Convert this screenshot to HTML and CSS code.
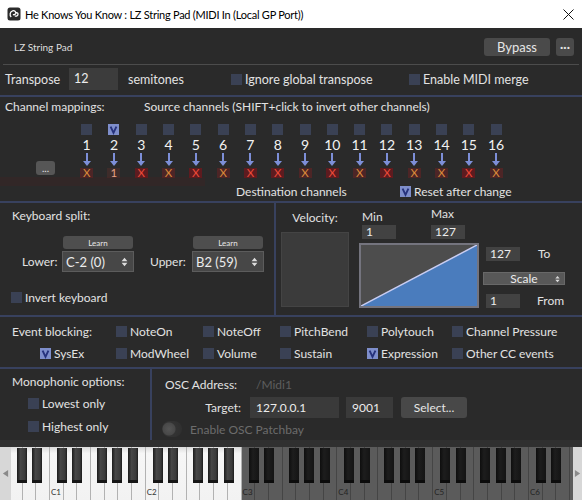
FILE: index.html
```html
<!DOCTYPE html>
<html>
<head>
<meta charset="utf-8">
<link rel="stylesheet" href="styles.css">
</head>
<body>
<div class="window">
  <div class="titlebar">
    <svg class="app-icon" width="14" height="14" viewBox="0 0 14 14">
      <rect x="0.5" y="0.5" width="13" height="13" rx="2.5" fill="#2b2b2b"/>
      <path d="M4.2 10 C2.4 8.4 2.8 4.6 5.6 3.8 C7.6 3.3 9 4.6 8.7 6.2 C8.4 7.6 7 8.1 5.9 7.5 M8.7 6.2 C9.6 5.3 11.2 5.8 11 7.3 C10.8 8.8 9.3 9.5 7.9 9" fill="none" stroke="#fff" stroke-width="1.3"/>
    </svg>
    <span class="title">He Knows You Know : LZ String Pad (MIDI In (Local GP Port))</span>
    <svg class="close" width="11" height="11" viewBox="0 0 11 11"><path d="M0.5 0.5 L10.5 10.5 M10.5 0.5 L0.5 10.5"/></svg>
  </div>

  <div class="header">
    <span class="plugin-name">LZ String Pad</span>
    <button class="btn bypass">Bypass</button>
    <button class="btn more">&middot;&middot;&middot;</button>
  </div>

  <div class="transpose">
    <span class="tr-label">Transpose</span>
    <span class="field tr-field">12</span>
    <span class="tr-unit">semitones</span>
    <label class="chk tr-ignore"><span class="cb"></span>Ignore global transpose</label>
    <label class="chk"><span class="cb"></span>Enable MIDI merge</label>
  </div>

  <section class="channels">
    <div class="ch-head">
      <span class="ch-title">Channel mappings:</span>
      <span>Source channels (SHIFT+click to invert other channels)</span>
    </div>
    <div class="ch-body">
      <div class="ch-more"><button class="btn dots">...</button></div>
      <div class="ch-grid">
        <div class="ch"><span class="cb"></span><span class="num">1</span><span class="arrow"></span><span class="dest o">X</span></div>
        <div class="ch"><span class="cb on"><svg viewBox="0 0 11 11"><path d="M2.6 2.6 L5.5 8.8 L8.4 2.6"/></svg></span><span class="num">2</span><span class="arrow"></span><span class="dest p">1</span></div>
        <div class="ch"><span class="cb"></span><span class="num">3</span><span class="arrow"></span><span class="dest">X</span></div>
        <div class="ch"><span class="cb"></span><span class="num">4</span><span class="arrow"></span><span class="dest o">X</span></div>
        <div class="ch"><span class="cb"></span><span class="num">5</span><span class="arrow"></span><span class="dest">X</span></div>
        <div class="ch"><span class="cb"></span><span class="num">6</span><span class="arrow"></span><span class="dest o">X</span></div>
        <div class="ch"><span class="cb"></span><span class="num">7</span><span class="arrow"></span><span class="dest">X</span></div>
        <div class="ch"><span class="cb"></span><span class="num">8</span><span class="arrow"></span><span class="dest">X</span></div>
        <div class="ch"><span class="cb"></span><span class="num">9</span><span class="arrow"></span><span class="dest o">X</span></div>
        <div class="ch"><span class="cb"></span><span class="num">10</span><span class="arrow"></span><span class="dest">X</span></div>
        <div class="ch"><span class="cb"></span><span class="num">11</span><span class="arrow"></span><span class="dest o">X</span></div>
        <div class="ch"><span class="cb"></span><span class="num">12</span><span class="arrow"></span><span class="dest">X</span></div>
        <div class="ch"><span class="cb"></span><span class="num">13</span><span class="arrow"></span><span class="dest o">X</span></div>
        <div class="ch"><span class="cb"></span><span class="num">14</span><span class="arrow"></span><span class="dest o">X</span></div>
        <div class="ch"><span class="cb"></span><span class="num">15</span><span class="arrow"></span><span class="dest">X</span></div>
        <div class="ch"><span class="cb"></span><span class="num">16</span><span class="arrow"></span><span class="dest o">X</span></div>
      </div>
    </div>
    <div class="ch-foot">
      <span class="ch-dest">Destination channels</span>
      <label class="chk"><span class="cb on"><svg viewBox="0 0 11 11"><path d="M2.6 2.6 L5.5 8.8 L8.4 2.6"/></svg></span>Reset after change</label>
    </div>
  </section>

  <div class="split-row">
    <section class="split">
      <div class="sec-title">Keyboard split:</div>
      <div class="split-controls">
        <span class="split-label lower">Lower:</span>
        <div class="note-picker">
          <button class="btn learn">Learn</button>
          <div class="select note-select">C-2 (0)<svg class="spin" viewBox="0 0 8 12"><path d="M4 1 L7.5 5 H0.5Z M4 11 L7.5 7 H0.5Z"/></svg></div>
        </div>
        <span class="split-label upper">Upper:</span>
        <div class="note-picker">
          <button class="btn learn">Learn</button>
          <div class="select note-select">B2 (59)<svg class="spin" viewBox="0 0 8 12"><path d="M4 1 L7.5 5 H0.5Z M4 11 L7.5 7 H0.5Z"/></svg></div>
        </div>
      </div>
      <label class="chk invert"><span class="cb"></span>Invert keyboard</label>
    </section>

    <section class="velocity">
      <div class="vel-col">
        <div class="vel-title">Velocity:</div>
        <div class="vel-box"></div>
      </div>
      <div class="vel-main">
        <div class="vel-range">
          <div class="vm vm-min"><span>Min</span><span class="field small">1</span></div>
          <div class="vm vm-max"><span>Max</span><span class="field small">127</span></div>
        </div>
        <div class="graph">
          <svg viewBox="0 0 116 61" preserveAspectRatio="none">
            <polygon points="0,61 116,0 116,61" fill="#4a7cbd"/>
            <line x1="0" y1="61" x2="116" y2="0" stroke="#c9cdf2" stroke-width="1.5"/>
          </svg>
        </div>
      </div>
      <div class="vel-side">
        <div class="vs-row to"><span class="field small">127</span><span class="vs-label">To</span></div>
        <div class="select scale">Scale<svg class="spin" viewBox="0 0 8 12"><path d="M4 1 L7.5 5 H0.5Z M4 11 L7.5 7 H0.5Z"/></svg></div>
        <div class="vs-row from"><span class="field small">1</span><span class="vs-label">From</span></div>
      </div>
    </section>
  </div>

  <section class="events">
    <span>Event blocking:</span>
    <label class="chk"><span class="cb"></span>NoteOn</label>
    <label class="chk"><span class="cb"></span>NoteOff</label>
    <label class="chk"><span class="cb"></span>PitchBend</label>
    <label class="chk"><span class="cb"></span>Polytouch</label>
    <label class="chk"><span class="cb"></span>Channel Pressure</label>
    <label class="chk sysex"><span class="cb on"><svg viewBox="0 0 11 11"><path d="M2.6 2.6 L5.5 8.8 L8.4 2.6"/></svg></span>SysEx</label>
    <label class="chk"><span class="cb"></span>ModWheel</label>
    <label class="chk"><span class="cb"></span>Volume</label>
    <label class="chk"><span class="cb"></span>Sustain</label>
    <label class="chk"><span class="cb on"><svg viewBox="0 0 11 11"><path d="M2.6 2.6 L5.5 8.8 L8.4 2.6"/></svg></span>Expression</label>
    <label class="chk"><span class="cb"></span>Other CC events</label>
  </section>

  <div class="bottom">
    <section class="mono">
      <div class="sec-title">Monophonic options:</div>
      <label class="chk lowest"><span class="cb"></span>Lowest only</label>
      <label class="chk highest"><span class="cb"></span>Highest only</label>
    </section>
    <section class="osc">
      <div class="osc-addr"><span class="osc-label">OSC Address:</span><span class="osc-path">/Midi1</span></div>
      <div class="osc-target">
        <span class="target-label">Target:</span>
        <span class="field ip">127.0.0.1</span>
        <span class="field port">9001</span>
        <button class="btn select-btn">Select...</button>
      </div>
      <div class="osc-toggle"><span class="toggle"></span><span>Enable OSC Patchbay</span></div>
    </section>
  </div>

  <div class="kb-bar"></div>

  <div class="keyboard">
    <div class="keys">
      <div class="octave">
        <div class="wk"></div><div class="wk"></div><div class="wk"></div><div class="wk"></div><div class="wk"></div><div class="wk"></div><div class="wk"></div>
        <div class="bk cs"></div><div class="bk ds"></div><div class="bk fs"></div><div class="bk gs"></div><div class="bk as"></div>
      </div>
      <div class="octave">
        <div class="wk"><span class="lbl">C1</span></div><div class="wk"></div><div class="wk"></div><div class="wk"></div><div class="wk"></div><div class="wk"></div><div class="wk"></div>
        <div class="bk cs"></div><div class="bk ds"></div><div class="bk fs"></div><div class="bk gs"></div><div class="bk as"></div>
      </div>
      <div class="octave">
        <div class="wk"><span class="lbl">C2</span></div><div class="wk"></div><div class="wk"></div><div class="wk"></div><div class="wk"></div><div class="wk"></div><div class="wk"></div>
        <div class="bk cs"></div><div class="bk ds"></div><div class="bk fs"></div><div class="bk gs"></div><div class="bk as"></div>
      </div>
      <div class="octave off">
        <div class="wk"><span class="lbl">C3</span></div><div class="wk"></div><div class="wk"></div><div class="wk"></div><div class="wk"></div><div class="wk"></div><div class="wk"></div>
        <div class="bk cs"></div><div class="bk ds"></div><div class="bk fs"></div><div class="bk gs"></div><div class="bk as"></div>
      </div>
      <div class="octave off">
        <div class="wk"><span class="lbl">C4</span></div><div class="wk"></div><div class="wk"></div><div class="wk"></div><div class="wk"></div><div class="wk"></div><div class="wk"></div>
        <div class="bk cs"></div><div class="bk ds"></div><div class="bk fs"></div><div class="bk gs"></div><div class="bk as"></div>
      </div>
      <div class="octave off">
        <div class="wk"><span class="lbl">C5</span></div><div class="wk"></div><div class="wk"></div><div class="wk"></div><div class="wk"></div><div class="wk"></div><div class="wk"></div>
        <div class="bk cs"></div><div class="bk ds"></div><div class="bk fs"></div><div class="bk gs"></div><div class="bk as"></div>
      </div>
      <div class="octave off">
        <div class="wk"><span class="lbl">C6</span></div><div class="wk"></div><div class="wk"></div><div class="wk"></div><div class="wk"></div><div class="wk"></div><div class="wk"></div>
        <div class="bk cs"></div><div class="bk ds"></div><div class="bk fs"></div><div class="bk gs"></div><div class="bk as"></div>
      </div>
    </div>
    <div class="kb-arrow left"><svg viewBox="0 0 8 10"><path d="M1 5 L7 1 V9Z"/></svg></div>
    <div class="kb-arrow right"><svg viewBox="0 0 8 10"><path d="M7 5 L1 1 V9Z"/></svg></div>
  </div>
</div>
</body>
</html>
```

FILE: styles.css
```css
* {
  box-sizing: border-box;
}
body {
  margin: 0;
  background: #2a2a2a;
  font-family: Lato, "Noto Sans", sans-serif;
  font-size: 12px;
  color: #e2e2e2;
}
.window {
  width: 582px;
  height: 500px;
  display: flex;
  flex-direction: column;
  overflow: hidden;
}

/* title bar */
.titlebar {
  height: 28px;
  flex: none;
  display: flex;
  align-items: center;
  padding: 0 8px 0 7px;
  background: #fff;
  color: #000;
  font-size: 11px;
  letter-spacing: -0.25px;
}
.app-icon {
  margin-right: 4px;
}
.title {
  flex: 1;
}
.close path {
  stroke: #111;
  stroke-width: 1;
}

/* generic bits */
.btn {
  border: none;
  border-radius: 3px;
  background: #4a4a4a;
  color: #e6e6e6;
  font: inherit;
  padding: 0;
}
.field {
  display: inline-block;
  background: #3c3c3c;
  color: #ececec;
  padding-left: 5px;
}
.field.small {
  width: 34px;
  height: 14px;
  line-height: 14px;
  padding-left: 4px;
  background: #424242;
}
.chk {
  display: flex;
  align-items: center;
  white-space: nowrap;
}
.cb {
  width: 11px;
  height: 11px;
  flex: none;
  margin-right: 3px;
  background: #3a4154;
  display: inline-block;
}
.cb.on {
  background: #7e8ecb;
}
.cb svg {
  display: block;
  width: 11px;
  height: 11px;
  fill: none;
  stroke: #26327c;
  stroke-width: 1.9;
}
.select {
  display: flex;
  align-items: center;
  background: #474747;
  border: 1px solid #5c5c5c;
  color: #ececec;
}
.spin {
  width: 7px;
  height: 10px;
  fill: #dcdcdc;
}
.sec-title {
  height: 14px;
  line-height: 14px;
}

/* header */
.header {
  height: 37px;
  flex: none;
  display: flex;
  align-items: center;
  margin: 0 3px;
  padding: 1px 5px 0 11px;
  border-bottom: 1px solid #4c4c4c;
}
.plugin-name {
  flex: 1;
  font-size: 10px;
  color: #dedede;
}
.bypass {
  width: 66px;
  height: 18px;
  font-size: 13px;
}
.more {
  width: 18px;
  height: 18px;
  margin-left: 6px;
  font-weight: bold;
  font-size: 12px;
}

/* transpose row */
.transpose {
  height: 32px;
  flex: none;
  display: flex;
  align-items: center;
  padding: 0 0 2px 5px;
  border-bottom: 2px solid #38415e;
  font-size: 12.5px;
}
.tr-label {
  width: 64px;
}
.tr-field {
  width: 49px;
  height: 22px;
  line-height: 22px;
}
.tr-unit {
  width: 113px;
  padding-left: 10px;
}
.tr-ignore {
  width: 178px;
}

/* channel mappings */
.channels {
  height: 106px;
  flex: none;
  position: relative;
  border-bottom: 2px solid #38415e;
}
.channels::after {
  content: "";
  position: absolute;
  left: 0;
  top: 80px;
  width: 205px;
  height: 9px;
  background: rgba(100, 20, 24, 0.14);
}
.ch-head {
  height: 18px;
  display: flex;
  align-items: center;
  padding-left: 5px;
}
.ch-title {
  width: 139px;
}
.ch-body {
  display: flex;
  margin-top: 8px;
}
.ch-more {
  width: 73px;
  display: flex;
  justify-content: flex-end;
  align-items: flex-end;
  padding: 0 18px 3px 0;
}
.dots {
  width: 19px;
  height: 14px;
  background: #565656;
  font-size: 10px;
  line-height: 8px;
}
.ch-grid {
  display: grid;
  grid-template-columns: repeat(16, 27.3px);
}
.ch {
  display: flex;
  flex-direction: column;
  align-items: center;
}
.ch .cb {
  margin: 1px 0 0 0;
}
.num {
  height: 14px;
  line-height: 14px;
  margin-top: 3px;
  font-size: 14px;
  color: #f2f2f2;
}
.arrow {
  position: relative;
  width: 8px;
  height: 14px;
}
.arrow::before {
  content: "";
  position: absolute;
  left: 3px;
  top: 1px;
  width: 2px;
  height: 9px;
  background: #7d8fd8;
}
.arrow::after {
  content: "";
  position: absolute;
  left: 0;
  top: 9px;
  border-left: 4px solid transparent;
  border-right: 4px solid transparent;
  border-top: 5px solid #7d8fd8;
}
.dest {
  width: 13px;
  height: 10px;
  margin-top: 2px;
  background: #5e1b1f;
  color: #ec4a38;
  font-size: 11.5px;
  line-height: 10px;
  text-align: center;
}
.dest.o {
  background: #4d2526;
  color: #d98a3a;
}
.dest.p {
  background: #3e2c2a;
  color: #e6a284;
}
.ch-foot {
  display: flex;
  align-items: center;
  height: 14px;
  margin-top: 6px;
  padding-left: 236px;
}
.ch-dest {
  width: 164px;
}

/* keyboard split + velocity */
.split-row {
  height: 114px;
  flex: none;
  display: flex;
  border-bottom: 2px solid #38415e;
}
.split {
  width: 276px;
  flex: none;
  padding-top: 6px;
  border-right: 2px solid #38415e;
}
.split .sec-title {
  padding-left: 12px;
}
.split-controls {
  display: flex;
  align-items: flex-end;
  margin-top: 13px;
}
.split-label {
  height: 21px;
  line-height: 21px;
}
.split-label.lower {
  width: 62px;
  padding-left: 22px;
}
.split-label.upper {
  width: 58px;
  padding-left: 16px;
}
.note-picker {
  display: flex;
  flex-direction: column;
  width: 72px;
}
.learn {
  width: 70px;
  height: 13px;
  margin-left: 1px;
  font-size: 8px;
  background: #4e4e4e;
}
.note-select {
  height: 21px;
  margin-top: 2px;
  padding: 0 5px 0 3px;
  font-size: 13px;
  justify-content: space-between;
}
.invert {
  margin: 18px 0 0 11px;
  height: 14px;
}

.velocity {
  flex: 1;
  display: flex;
  padding-left: 5px;
}
.vel-col {
  width: 68px;
}
.vel-title {
  height: 14px;
  line-height: 14px;
  margin-top: 8px;
  text-align: center;
}
.vel-box {
  height: 75px;
  margin-top: 7px;
  background: #3b3b3b;
  border: 1px solid #444;
}
.vel-main {
  width: 120px;
  margin-left: 10px;
}
.vel-range {
  height: 36px;
  display: flex;
  align-items: flex-end;
}
.vm {
  display: flex;
  flex-direction: column;
}
.vm span:first-child {
  line-height: 12px;
  margin-bottom: 2px;
}
.vm-min {
  margin-left: 3px;
}
.vm-max {
  margin-left: 35px;
}
.vm-max span:first-child {
  margin-bottom: 5px;
}
.graph {
  height: 65px;
  margin-top: 4px;
  background: #4d4d4d;
  border: 2px solid #74747e;
}
.graph svg {
  display: block;
  width: 100%;
  height: 100%;
}
.vel-side {
  margin-left: 4px;
  width: 84px;
  padding-top: 43px;
}
.vs-row {
  display: flex;
  align-items: center;
  padding-left: 3px;
}
.vs-row.to .vs-label {
  margin-left: 18px;
}
.vs-row.from .vs-label {
  margin-left: 17px;
}
.scale {
  width: 82px;
  height: 13px;
  margin-top: 11px;
  margin-bottom: 8px;
  background: #585858;
  border-color: #686868;
  justify-content: center;
  position: relative;
  font-size: 12px;
}
.scale .spin {
  position: absolute;
  right: 4px;
  width: 5px;
  height: 8px;
}

/* event blocking */
.events {
  height: 52px;
  flex: none;
  display: grid;
  grid-template-columns: 104px 87px 77px 87px 85px 1fr;
  grid-auto-rows: 14px;
  row-gap: 8px;
  align-items: center;
  padding: 7px 0 0 12px;
  border-bottom: 2px solid #38415e;
}
.sysex {
  margin-left: 28px;
}

/* monophonic + osc */
.bottom {
  height: 71px;
  flex: none;
  display: flex;
}
.mono {
  width: 152px;
  flex: none;
  padding: 6px 0 0 12px;
  border-right: 2px solid #38415e;
}
.mono .chk {
  height: 14px;
  margin-left: 16px;
}
.lowest {
  margin-top: 7px;
}
.highest {
  margin-top: 9px;
}
.osc {
  flex: 1;
  padding: 8px 0 0 13px;
}
.osc-addr {
  display: flex;
  height: 14px;
  align-items: center;
}
.osc-label {
  width: 91px;
}
.osc-path {
  color: #5e5e5e;
}
.osc-target {
  display: flex;
  align-items: center;
  margin-top: 6px;
}
.target-label {
  width: 76px;
  text-align: right;
}
.osc-target .field {
  height: 21px;
  line-height: 21px;
  background: #3a3a3a;
  padding-left: 6px;
}
.ip {
  width: 89px;
  margin-left: 9px;
}
.port {
  width: 47px;
  margin-left: 7px;
}
.select-btn {
  width: 66px;
  height: 21px;
  margin-left: 8px;
  background: #484848;
}
.osc-toggle {
  display: flex;
  align-items: center;
  height: 14px;
  margin: 4px 0 0 -3px;
  color: #6c6c6c;
}
.toggle {
  width: 20px;
  height: 16px;
  margin-right: 8px;
  border-radius: 8px;
  background: radial-gradient(circle at 7px 8px, #555 0, #484848 6px, #333 7px, #2e2e2e 100%);
}

/* piano keyboard */
.kb-bar {
  height: 7px;
  flex: none;
  background: #303030;
}
.keyboard {
  height: 53px;
  flex: none;
  position: relative;
  overflow: hidden;
  background: #5a5a5a;
}
.keys {
  display: flex;
  height: 100%;
  margin-left: -45.9px;
}
.octave {
  position: relative;
  display: flex;
  flex: none;
  height: 100%;
}
.wk {
  position: relative;
  width: 13.7px;
  height: 100%;
  flex: none;
  background: linear-gradient(#dcdcdc, #f6f6f6 12%, #f2f2f2);
  border-right: 1px solid #b2b2b2;
}
.off .wk {
  background: #5b5b5b;
  border-right-color: #454545;
}
.lbl {
  position: absolute;
  left: 1px;
  bottom: 3px;
  font-size: 8px;
  color: #333;
}
.off .lbl {
  color: #242424;
}
.bk {
  position: absolute;
  top: 1px;
  width: 10px;
  height: 35px;
  background: linear-gradient(to right, #1c1c1c, #474747 35%, #3a3a3a 80%, #1c1c1c);
  border-bottom: 3px solid #161616;
}
.off .bk {
  background: linear-gradient(to right, #0e0e0e, #1d1d1d 40%, #141414);
  border-bottom-color: #0c0c0c;
}
.cs { left: 7px; }
.ds { left: 22.5px; }
.fs { left: 47px; }
.gs { left: 62.5px; }
.as { left: 78px; }
.kb-arrow {
  position: absolute;
  top: 0;
  bottom: 0;
  display: flex;
  align-items: center;
  justify-content: center;
  background: #d7d7d7;
}
.kb-arrow.left {
  left: 0;
  width: 11px;
}
.kb-arrow.right {
  right: 0;
  width: 9px;
}
.kb-arrow svg {
  width: 7px;
  height: 9px;
  fill: #8a8a8a;
}
```
